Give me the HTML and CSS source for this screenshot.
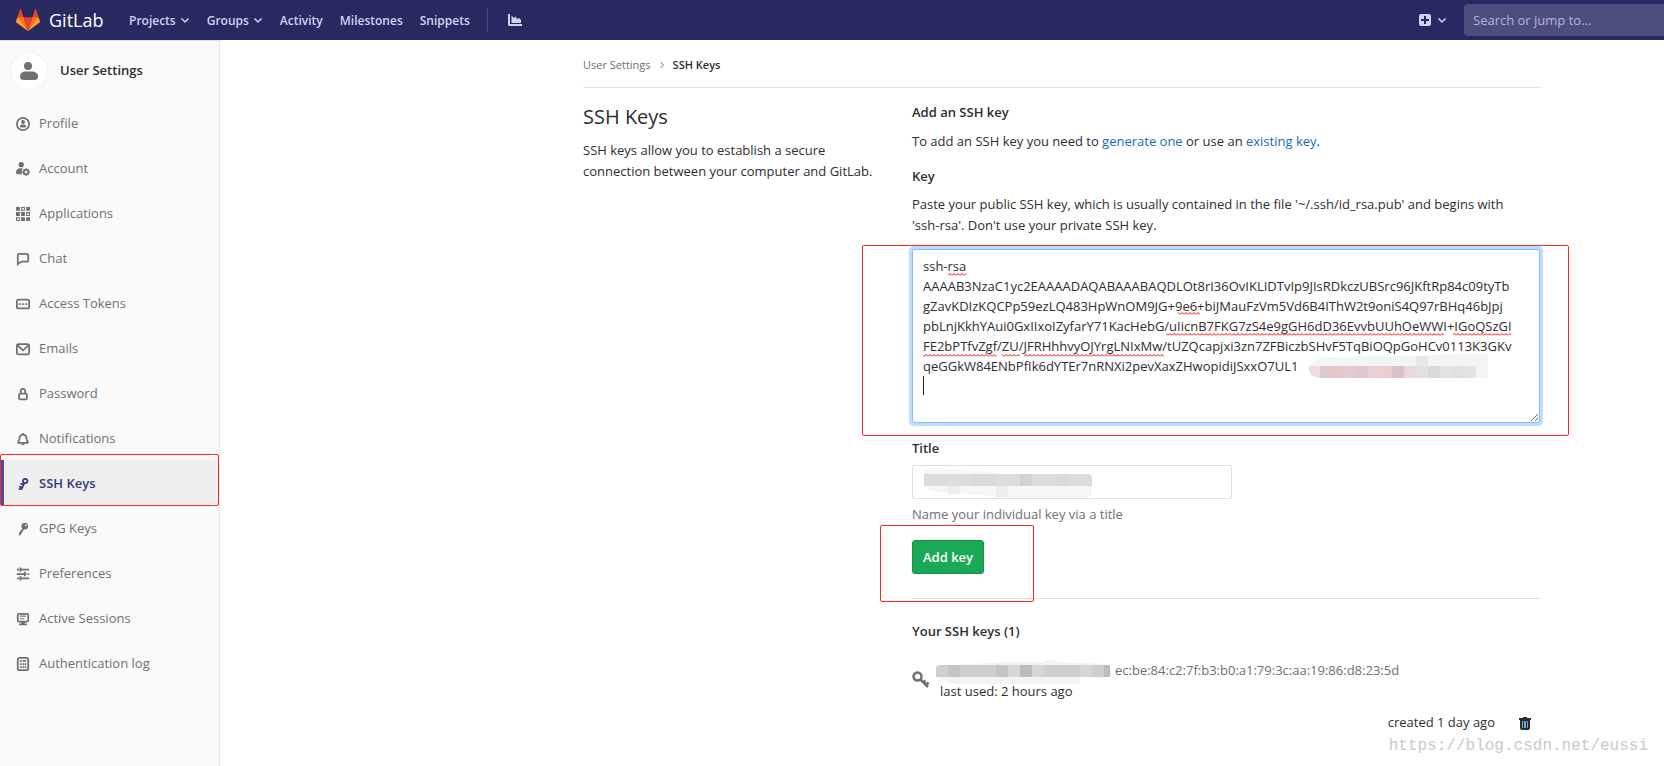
FILE: index.html
```html
<!DOCTYPE html>
<html lang="en">
<head>
<meta charset="utf-8">
<title>SSH Keys · User Settings · GitLab</title>
<link rel="stylesheet" href="styles.css">
</head>
<body>
<header class="navbar">
  <a class="brand" href="#">
    <svg class="tanuki" viewBox="0 0 36 36" aria-hidden="true">
      <path fill="#e24329" d="M2 14l9.38 9v-9l-4-12.28c-.205-.632-1.176-.632-1.38 0z"/>
      <path fill="#e24329" d="M34 14l-9.38 9v-9l4-12.28c.205-.632 1.176-.632 1.38 0z"/>
      <path fill="#e24329" d="M18 34.38L24.6 14H11.4z"/>
      <path fill="#fc6d26" d="M18 34.38L11.38 14H2l6 12.5zM18 34.38L24.62 14H34l-6 12.5z"/>
      <path fill="#fca326" d="M2 14L.1 20.16c-.18.565 0 1.2.5 1.56l17.42 12.66zM34 14l1.9 6.16c.18.565 0 1.2-.5 1.56L18 34.38z"/>
    </svg>
    <span>GitLab</span>
  </a>
  <nav class="menu">
    <button class="menu-item" type="button">Projects<svg class="caret" viewBox="0 0 10 10"><path d="M1.5 3.5L5 7l3.500-3.500"/></svg></button>
    <button class="menu-item" type="button">Groups<svg class="caret" viewBox="0 0 10 10"><path d="M1.500 3.500L5 7l3.500-3.500"/></svg></button>
    <a class="menu-item" href="#">Activity</a>
    <a class="menu-item" href="#">Milestones</a>
    <a class="menu-item" href="#">Snippets</a>
    <a class="menu-item chart" href="#" aria-label="Instance statistics">
      <svg viewBox="0 0 14 14"><path d="M0 1h2v10h12v2H1.500A1.500 1.500 0 0 1 0 11.500z"/><path d="M3.500 10V2.500L6 5l1.500-1.500L9 6l2-1 2 2v3z"/></svg>
    </a>
  </nav>
  <button class="new-btn" type="button" aria-label="New">
    <svg class="plus" viewBox="0 0 12 12"><path fill-rule="evenodd" d="M2 0h8a2 2 0 0 1 2 2v8a2 2 0 0 1-2 2H2a2 2 0 0 1-2-2V2a2 2 0 0 1 2-2zm3 2v3H2v2h3v3h2V7h3V5H7V2z"/></svg>
    <svg class="caret" viewBox="0 0 10 10"><path d="M1.500 3.500L5 7l3.500-3.500"/></svg>
  </button>
  <input class="search" type="text" placeholder="Search or jump to..." aria-label="Search or jump to">
</header>

<div class="page">
  <aside class="sidebar">
    <a class="context" href="#">
      <span class="avatar"><svg viewBox="0 0 18 18"><circle cx="8" cy="4" r="4"/><path d="M0 14.500C0 11 3 9.500 5 9.500h7c3 0 6 1.500 6 5 0 2-1 3.500-3 3.500H3c-2 0-3-1.500-3-3.500z"/></svg></span>
      User Settings
    </a>
    <ul class="side-nav">
      <li><a href="#"><svg viewBox="0 0 16 16"><path fill-rule="evenodd" d="M8 0a8 8 0 1 1 0 16A8 8 0 0 1 8 0zm0 2a6 6 0 1 0 0 12A6 6 0 0 0 8 2z"/><circle cx="8" cy="5.700" r="2.200"/><path d="M4.500 10.500c0-1.300 1.500-2 3.500-2s3.500.7 3.500 2S10.500 12 8 12s-3.500-.2-3.500-1.500z"/></svg>Profile</a></li>
      <li><a href="#"><svg viewBox="0 0 16 16"><circle cx="6" cy="3" r="3"/><path d="M0 11.500C0 8.500 2.500 7 5 7h2.500C6.500 9 6.500 11.500 7 14H2c-1.300 0-2-1-2-2.500z"/><circle cx="11.500" cy="11.500" r="2.600" fill="none" stroke="currentColor" stroke-width="2"/><path fill="none" stroke="currentColor" stroke-width="1.600" d="M11.500 7v1.500m0 6V16M7 11.500h1.500m6 0H16M8.500 8.500l1 1m4 4l1 1m0-6l-1 1m-4 4l-1 1"/></svg>Account</a></li>
      <li><a href="#"><svg viewBox="0 0 16 16"><path fill-rule="evenodd" d="M0 0h4.400v4.400H0zM5.800 0h4.400v4.400H5.800zM7 1.200v2h2v-2zM11.600 0H16v4.400h-4.400zM0 5.800h4.400v4.400H0zM5.800 5.800h4.400v4.400H5.800zM11.600 5.800H16v4.400h-4.400zM12.800 7v2h2V7zM0 11.600h4.400V16H0zM1.200 12.800v2h2v-2zM5.800 11.600h4.400V16H5.800zM11.600 11.600H16V16h-4.400z"/></svg>Applications</a></li>
      <li><a href="#"><svg viewBox="0 0 16 16"><path class="line" d="M2 14V4a2 2 0 0 1 2-2h8a2 2 0 0 1 2 2v5a2 2 0 0 1-2 2H6z"/></svg>Chat</a></li>
      <li><a href="#"><svg viewBox="0 0 16 16"><rect class="line" x="1" y="3" width="14" height="10" rx="2"/><path d="M3.500 7h2v2h-2zM7 7h2v2H7zM10.500 7h2v2h-2z"/></svg>Access Tokens</a></li>
      <li><a href="#"><svg viewBox="0 0 16 16"><rect class="line" x="1" y="2.500" width="14" height="11.500" rx="2"/><path class="line" d="M2 4l6 5.500L14 4"/></svg>Emails</a></li>
      <li><a href="#"><svg viewBox="0 0 16 16"><rect class="line" x="3.500" y="7.500" width="9" height="6.500" rx="1.500"/><path class="line" d="M5.500 7V4.500a2.500 2.500 0 0 1 5 0V7"/></svg>Password</a></li>
      <li><a href="#"><svg viewBox="0 0 16 16"><path class="line" d="M2.500 12.500c-1-1 1.500-2.500 1.500-5A4 4 0 0 1 8 3a4 4 0 0 1 4 4.500c0 2.500 2.500 4 1.500 5z"/><path d="M7 1h2v2H7zM6 13h4c0 1-1 2-2 2s-2-1-2-2z"/></svg>Notifications</a></li>
      <li class="active"><a href="#" aria-current="page"><svg viewBox="0 0 16 16"><circle class="line" cx="10.500" cy="4.500" r="2.500"/><path class="line" d="M9.500 7L6 14.500M8.500 8.500L5 7.500M7 12l-3.500-1M6.500 14l-3.500-.5"/></svg>SSH Keys</a></li>
      <li><a href="#"><svg viewBox="0 0 16 16"><path fill-rule="evenodd" d="M10 1a3.800 3.800 0 1 1 0 7.600 L9 8.500 5 15l-2 0 .5-2.500 3.700-5A3.800 3.800 0 0 1 10 1zm1.200 1.800a1 1 0 1 0 0 2 1 1 0 0 0 0-2z"/></svg>GPG Keys</a></li>
      <li><a href="#"><svg viewBox="0 0 16 16"><path d="M1 2h2.500v2H1zM6 2h9v2H6v1.500H4v-5h2zM1 7h8V5.500h2V7h1v2h-1v1.500H9V9H1zM13 7h2v2h-2zM1 12h2.500v2H1zM6 12h9v2H6v1.500H4v-5h2z"/></svg>Preferences</a></li>
      <li><a href="#"><svg viewBox="0 0 16 16"><rect class="line" x="2" y="2" width="12" height="9" rx="1.500"/><path d="M4.500 4h7v1.300h-7zM4.500 7h5v1.300h-5zM6 11h4v2h2.500v2h-9v-2H6z"/></svg>Active Sessions</a></li>
      <li><a href="#"><svg viewBox="0 0 16 16"><rect class="line" x="2" y="1" width="12" height="14" rx="2"/><path d="M4.500 3.500h2v2h-2zM7.500 3.500h4v2h-4zM4.500 7h2v2h-2zM7.500 7h1.800v2H7.500zM10 7h1.800v2H10zM4.500 10.500h2v2h-2zM7.500 10.500h1.800v2H7.500zM10 10.500h1.800v2H10z"/></svg>Authentication log</a></li>
    </ul>
  </aside>

  <main class="content">
    <nav class="crumbs" aria-label="Breadcrumb">
      <a href="#">User Settings</a>
      <svg viewBox="0 0 8 8"><path d="M2.500 1L5.500 4l-3 3"/></svg>
      <strong>SSH Keys</strong>
    </nav>
    <div class="columns">
      <section class="intro">
        <h1>SSH Keys</h1>
        <p>SSH keys allow you to establish a secure<br>connection between your computer and GitLab.</p>
      </section>
      <section class="detail">
        <h2>Add an SSH key</h2>
        <p class="lead">To add an SSH key you need to <a href="#">generate one</a> or use an <a href="#">existing key</a>.</p>
        <form>
          <label for="key">Key</label>
          <p class="help">Paste your public SSH key, which is usually contained in the file '~/.ssh/id_rsa.pub' and begins with<br>'ssh-rsa'. Don't use your private SSH key.</p>
          <div class="field">
            <textarea id="key" rows="8" spellcheck="false">ssh-rsa
AAAAB3NzaC1yc2EAAAADAQABAAABAQDLOt8rI36OvIKLIDTvIp9JIsRDkczUBSrc96JKftRp84c09tyTb
gZavKDIzKQCPp59ezLQ483HpWnOM9JG+9e6+biJMauFzVm5Vd6B4IThW2t9oniS4Q97rBHq46bJpj
pbLnjKkhYAui0GxIIxoIZyfarY71KacHebG/uIicnB7FKG7zS4e9gGH6dD36EvvbUUhOeWWI+IGoQSzGI
FE2bPTfvZgf/ZU/JFRHhhvyOJYrgLNIxMw/tUZQcapjxi3zn7ZFBiczbSHvF5TqBiOQpGoHCv0113K3GKv
qeGGkW84ENbPfIk6dYTEr7nRNXi2pevXaxZHwopidiJSxxO7UL1
</textarea>
            <svg class="marks" viewBox="0 0 628 174" aria-hidden="true">
              <defs><pattern id="wave" width="4" height="3" patternUnits="userSpaceOnUse"><path d="M0 2.500L2 .5l2 2" fill="none" stroke="#f00" stroke-width="1"/></pattern></defs>
              <g fill="url(#wave)">
                <rect x="36" y="24" width="18" height="3"/><rect x="266" y="63" width="22" height="3"/>
                <rect x="254" y="84" width="278" height="3"/><rect x="541" y="84" width="58" height="3"/>
                <rect x="11" y="105" width="74" height="3"/><rect x="90" y="105" width="18" height="3"/><rect x="112" y="105" width="140" height="3"/>
              </g>
              <path d="M11.500 127v19" stroke="#222"/>
              <g class="mosaic">
                <path fill="#f3f4f4" d="M397 117q5-8 18-9l80-1 57-2h24v13z"/>
                <path fill="#eedddf" d="M408 117h-11q-1 11 11 12z"/>
                <path fill="#dec8cd" d="M408 117h12v12h-12zM444 117h12v12h-12z"/><path fill="#e5c7c6" d="M420 117h12v12h-12z"/><path fill="#dfcbd2" d="M432 117h12v12h-12z"/><path fill="#e6d0d3" d="M456 117h12v12h-12z"/><path fill="#ebcdcb" d="M468 117h12v12h-12z"/><path fill="#dac0c7" d="M480 117h12v12h-12z"/><path fill="#ead8dc" d="M492 117h12v12h-12z"/><path fill="#dfe0e2" d="M504 117h12v12h-12zM540 117h12v12h-12z"/><path fill="#d8dad9" d="M516 117h12v12h-12z"/><path fill="#e1e4e4" d="M528 117h12v12h-12z"/><path fill="#e4e3e1" d="M552 117h12v12h-12z"/><path fill="#f5f5f8" d="M564 117h12v12h-12z"/><path fill="#e6e7e6" d="M504 107h12v10h-12z"/>
              </g>
            </svg>
            <span class="callout callout-key"></span>
          </div>
          <label for="title">Title</label>
          <div class="field title-field">
            <input id="title" type="text">
            <svg class="title-mask" viewBox="0 0 170 30" aria-hidden="true">
              <path fill="#f6f6f7" d="M2 3q3-2 15-1l40 2 113 14v12H84L14 25Q0 24 2 3z"/>
              <path fill="#dcdcde" d="M2 7h164q4 0 4 4v8H2z"/><path fill="#e0dcde" d="M26 7h12v12H26zM74 7h12v12H74z"/><path fill="#d7dad7" d="M50 7h12v12H50zM134 7h12v12h-12z"/><path fill="#d6dcda" d="M62 7h12v12H62z"/><path fill="#d6d1d1" d="M98 7h12v12H98z"/><path fill="#dddeda" d="M122 7h12v12h-12z"/><path fill="#eeeded" d="M26 19h12v8H26zM74 19h12v11H74z"/>
            </svg>
          </div>
          <p class="hint">Name your individual key via a title</p>
          <div class="actions field">
            <button class="add" type="button">Add key</button>
            <span class="callout callout-add"></span>
          </div>
        </form>
        <hr>
        <h2 class="list-title">Your SSH keys (1)</h2>
        <div class="key-row">
          <svg class="key-icon" viewBox="0 0 18 18"><circle cx="5.500" cy="5.500" r="4"/><path d="M8 8l8 8M11.500 11.500l2-2M14 14l2.500-2.500"/></svg>
          <div class="key-info">
            <div class="fingerprint">
              <svg class="name-mask" viewBox="0 0 176 24" aria-hidden="true">
                <path fill="#f3f3f3" d="M0 6l72-4h36V0h12v2l50 2v10h-26v10H24Q0 24 0 6z"/>
                <path fill="#cfcfcf" d="M4 5h168q4 4 2 12H0V9q0-4 4-4z"/><path fill="#c8c2c4" d="M12 5h12v12H12zM60 5h12v12H60z"/><path fill="#babdbd" d="M84 5h12v12H84z"/><path fill="#d6d6d6" d="M72 5h12v12H72zM96 5h12v12H96zM144 5h12v12h-12z"/><path fill="#bcbcbf" d="M168 5h6v12h-6z"/>
              </svg>
              <span>ec:be:84:c2:7f:b3:b0:a1:79:3c:aa:19:86:d8:23:5d</span>
            </div>
            <div class="last-used">last used: 2 hours ago</div>
          </div>
        </div>
        <div class="created">
          <span>created 1 day ago</span>
          <button type="button" class="trash" aria-label="Remove"><svg viewBox="0 0 12 14"><path fill="#2e2e2e" d="M4 1h4v1h4v2H0V2h4zM1 4h10v8q0 2-2 2H3q-2 0-2-2z"/><path fill="#6fa8dc" d="M3 5h1v7H3zM5 5h2v7H5zM8 5h1v7H8z"/></svg></button>
        </div>
      </section>
    </div>
  </main>
</div>
<div class="watermark">https://blog.csdn.net/eussi</div>
</body>
</html>
```
FILE: styles.css
```css
* { box-sizing: border-box; }
body {
  margin: 0;
  font: 13px/21px "Open Sans", "Noto Sans", sans-serif;
  color: #2e2e2e;
  background: #fff;
  overflow: hidden;
}
a { color: #1b69b6; text-decoration: none; }
button, input, textarea { font: inherit; color: inherit; }
button { border: 0; background: none; padding: 0; }
h1, h2, p, ul { margin: 0; padding: 0; font-weight: 400; }

.navbar {
  display: flex;
  align-items: center;
  height: 40px;
  padding-left: 16px;
  background: #292961;
  color: #d1d1f0;
}
.brand { display: flex; align-items: center; gap: 9px; color: #fff; font: 18px/24px "Open Sans", sans-serif; width: 113px; }
.tanuki { width: 24px; height: 24px; }
.menu { display: flex; align-items: center; flex: 1; font-size: 12px; font-weight: 600; }
.menu-item { display: flex; align-items: center; color: #d1d1f0; font-weight: 600; gap: 4px; margin-right: 17px; }
.caret { width: 10px; height: 10px; fill: none; stroke: #d1d1f0; stroke-width: 1.5; }
.chart { border-left: 1px solid #4a4a82; height: 24px; padding-left: 20px; }
.chart svg { width: 14px; height: 14px; fill: #d1d1f0; }
.new-btn { display: flex; align-items: center; gap: 6px; margin-right: 17px; }
.plus { width: 12px; height: 12px; fill: #d1d1f0; }
.search {
  width: 200px; height: 32px; padding: 0 9px;
  border: 0; border-radius: 4px 0 0 4px;
  background: #4d4d7d; color: #d1d1f0;
}
.search::placeholder { color: #b3b3da; opacity: 1; }

.page { display: flex; min-height: calc(100vh - 40px); }
.sidebar { flex: none; width: 220px; border-right: 1px solid #e5e5e5; border-top: 1px solid #e5e5e5; background: #fafafa; }
.context { display: flex; align-items: center; gap: 12px; height: 59px; padding-left: 10px; color: #2e2e2e; font-weight: 600; }
.avatar { display: flex; align-items: center; justify-content: center; width: 38px; height: 38px; border: 1px solid #f2f2f2; border-radius: 50%; background: #fff; }
.avatar svg { width: 18px; height: 18px; fill: #707070; }
.side-nav { list-style: none; }
.side-nav a { display: flex; align-items: center; gap: 9px; height: 45px; padding: 2px 0 0 16px; color: #707070; }
.side-nav svg { width: 14px; height: 14px; fill: currentColor; }
.side-nav .line { fill: none; stroke: currentColor; stroke-width: 2; }
.side-nav .active { position: relative; }
.side-nav .active a { padding-left: 12px; border-left: 4px solid #4b4ba3; background: #efefef; color: #393982; font-weight: 600; }
.side-nav .active::after { content: ""; position: absolute; inset: -6px 0 -1px 0; border: 1px solid #fc2b1c; border-radius: 2px; }

.content { flex: 1; max-width: 1321px; padding-left: 363px; }
.crumbs { display: flex; align-items: center; gap: 7px; height: 48px; padding-top: 2px; border-bottom: 1px solid #e5e5e5; font-size: 11px; }
.crumbs a { color: #707070; }
.crumbs strong { font-weight: 600; }
.crumbs svg { width: 8px; height: 8px; fill: none; stroke: #707070; }
.columns { display: grid; grid-template-columns: 313px 1fr; gap: 16px; padding-right: 1px; }
.intro { padding-top: 16px; white-space: nowrap; }
.intro h1 { font-size: 20px; line-height: 26px; margin-bottom: 10px; }
.detail { padding-top: 14px; }
.detail h2 { font-size: 13px; line-height: 20px; font-weight: 600; }
.lead { margin: 9px 0 14px; }
label { display: block; font-weight: 600; }
.help { margin: 7px 0 13px; }
.field { position: relative; }
textarea {
  display: block; width: 100%; height: 174px; padding: 6px 10px;
  border: 1px solid #80bdff; border-radius: 2px; outline: 0;
  box-shadow: 0 0 0 3px #bfdeff;
  line-height: 20px; white-space: pre; overflow: hidden; resize: vertical;
}
.marks { position: absolute; left: 0; top: 0; width: 628px; height: 174px; pointer-events: none; }
.callout { position: absolute; border: 1px solid #fc2b1c; border-radius: 2px; pointer-events: none; }
.callout-key { inset: -4px -29px -13px -50px; }
.callout-add { left: -32px; top: -15px; width: 154px; height: 77px; }
.field + label { margin-top: 15px; }
.title-field { margin: 6px 0 5px; }
.title-field input { display: block; width: 320px; height: 34px; border: 1px solid #dfdfdf; border-radius: 2px; padding: 0 10px; }
.title-mask { position: absolute; left: 10px; top: 2px; width: 170px; height: 30px; }
.hint { color: #707070; }
.actions { margin: 15px 0 24px; }
.add { display: block; height: 34px; padding: 0 10px; border: 1px solid #168f48; border-radius: 3px; background: #1aaa55; color: #fff; font-weight: 600; }
hr { height: 1px; border: 0; margin: 0; background: #e0e0e0; }
.list-title { margin: 22px 0 19px; }
.key-row { display: flex; gap: 6px; }
.key-icon { width: 18px; height: 18px; margin-top: 11px; fill: none; stroke: #707070; stroke-width: 2.500; }
.fingerprint { display: flex; gap: 3px; color: #707070; height: 21px; }
.name-mask { width: 176px; height: 24px; }
.last-used { padding-left: 4px; }
.created { display: flex; justify-content: flex-end; align-items: center; gap: 24px; margin-top: 10px; padding-right: 9px; }
.trash { display: flex; }
.trash svg { width: 12px; height: 14px; }
.watermark { position: absolute; right: 16px; bottom: 8px; color: #c9c9c9; font: 16px/24px "Liberation Mono", monospace; }
```
